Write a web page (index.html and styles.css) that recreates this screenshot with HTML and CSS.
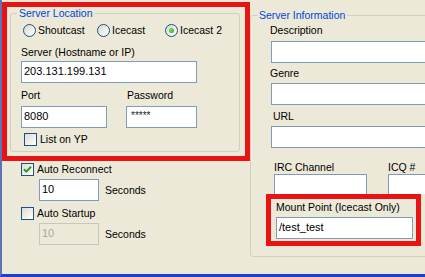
FILE: index.html
```html
<!DOCTYPE html>
<html lang="en">
<head>
    <meta charset="UTF-8">
    <meta name="viewport" content="width=device-width, initial-scale=1.0">
    <title>Server Settings</title>
    <link rel="stylesheet" href="styles.css">
</head>
<body>
    <div class="window">
        <div class="col-left">
            <div class="mark">
                <fieldset class="group">
                    <legend>Server Location</legend>
                    <div class="group-body">
                        <div class="radios">
                            <label class="radio-item r1"><span class="radio"></span>Shoutcast</label>
                            <label class="radio-item r2"><span class="radio"></span>Icecast</label>
                            <label class="radio-item"><span class="radio"><span class="dot"></span></span>Icecast 2</label>
                        </div>
                        <div class="field-label server-label">Server (Hostname or IP)</div>
                        <div class="textbox server-box">203.131.199.131</div>
                        <div class="port-grid">
                            <div class="field-label">Port</div>
                            <div class="field-label pw">Password</div>
                            <div class="textbox">8080</div>
                            <div class="textbox stars">*****</div>
                        </div>
                        <label class="check-item yp"><span class="check"></span>List on YP</label>
                    </div>
                </fieldset>
            </div>

            <div class="options">
                <label class="check-item">
                    <span class="check">
                        <svg width="11" height="11" viewBox="0 0 11 11"><path d="M2 5.2 L4.3 7.6 L9 2.8" fill="none" stroke="#21a121" stroke-width="2"/></svg>
                    </span>Auto Reconnect
                </label>
                <div class="sec-row">
                    <div class="textbox short">10</div>
                    <span>Seconds</span>
                </div>
                <label class="check-item startup"><span class="check"></span>Auto Startup</label>
                <div class="sec-row">
                    <div class="textbox short disabled">10</div>
                    <span>Seconds</span>
                </div>
            </div>
        </div>

        <div class="col-right">
            <fieldset class="group info">
                <legend>Server Information</legend>
                <div class="info-body">
                    <div class="field-label">Description</div>
                    <div class="textbox full first"></div>
                    <div class="field-label gap-label">Genre</div>
                    <div class="textbox full"></div>
                    <div class="field-label gap-label url">&nbsp;URL</div>
                    <div class="textbox full"></div>
                    <div class="irc-grid">
                        <div class="field-label">IRC Channel</div>
                        <div class="field-label">ICQ #</div>
                        <div class="textbox cut"></div>
                        <div class="textbox cut"></div>
                    </div>
                    <div class="mark mount">
                        <div class="field-label">Mount Point (Icecast Only)</div>
                        <div class="textbox mount-box">/test_test</div>
                    </div>
                </div>
            </fieldset>
        </div>
    </div>
</body>
</html>
```

FILE: styles.css
```css
body {
    margin: 0;
    background-color: #ece9d8;
    font-family: "Liberation Sans", Arial, sans-serif;
    font-size: 10.5px;
    color: #000;
    overflow: hidden;
}

.window {
    width: 425px;
    height: 277px;
    box-sizing: border-box;
    border-left: 2px solid #5b74b8;
    border-bottom: 3px solid #1d41c6;
    display: grid;
    grid-template-columns: 248px 175px;
    overflow: hidden;
}

/* red annotation frames */
.mark {
    border: 5px solid #e81414;
}

.col-left .mark {
    margin-top: 2px;
}

.group {
    margin: 0 5px 4px 3px;
    padding: 0;
    border: 1px solid #d0d0bf;
    border-radius: 3px;
    min-width: 0;
}

.group legend {
    margin-left: 6px;
    padding: 0 2px;
    color: #0046d5;
    line-height: 13px;
}

.group-body {
    padding: 4px 0 5px 10px;
}

.field-label {
    line-height: 13px;
    white-space: nowrap;
}

.textbox {
    height: 22px;
    box-sizing: border-box;
    border: 1px solid #7f9db9;
    background-color: #fff;
    padding: 0 2px;
    line-height: 18px;
    font-size: 11px;
    white-space: nowrap;
    overflow: hidden;
}

.radios {
    display: flex;
    margin-left: 2px;
}

.radio-item {
    display: flex;
    align-items: center;
    gap: 2px;
    line-height: 13px;
    flex: none;
}

.r1 {
    width: 74px;
}

.r2 {
    width: 68px;
}

.radio {
    width: 13px;
    height: 13px;
    box-sizing: border-box;
    border: 1px solid #1c5180;
    border-radius: 50%;
    background: linear-gradient(135deg, #d8d8d0, #fff);
    display: flex;
    align-items: center;
    justify-content: center;
}

.dot {
    width: 5px;
    height: 5px;
    border-radius: 50%;
    background: radial-gradient(circle at 40% 40%, #7be07b, #21a121);
}

.server-label {
    margin-top: 9px;
}

.server-box {
    width: 176px;
    margin-top: 2px;
}

.port-grid {
    display: grid;
    grid-template-columns: 86px 71px;
    column-gap: 19px;
    row-gap: 4px;
    margin-top: 6px;
}

.pw {
    padding-left: 1px;
}

.stars {
    color: #222;
    font-size: 10px;
    padding-left: 4px;
}

.check-item {
    display: flex;
    align-items: center;
    gap: 3px;
    line-height: 13px;
}

.check {
    width: 13px;
    height: 13px;
    box-sizing: border-box;
    border: 1px solid #1c5180;
    background: linear-gradient(135deg, #dcdcd7, #fff);
    display: flex;
    align-items: center;
    justify-content: center;
}

.yp {
    margin: 5px 0 0 3px;
}

.options {
    padding: 2px 0 0 19px;
}

.sec-row {
    display: flex;
    align-items: center;
    gap: 6px;
    margin: 3px 0 0 18px;
}

.short {
    width: 60px;
}

.startup {
    margin-top: 6px;
}

.disabled {
    border-color: #c9c7ba;
    background-color: #ece9d8;
    color: #aca899;
}

/* right side */
.info {
    margin: 9px -20px 0 0;
}

.info-body {
    padding: 2px 0 10px 15px;
}

.info .field-label {
    margin-left: 4px;
}

.full {
    width: 170px;
    margin-left: 5px;
    margin-top: 4px;
}

.gap-label {
    margin-top: 4px;
}

.info .full + .gap-label + .full {
    margin-top: 3px;
}

.info .url {
    margin-top: 5px;
}

.info .url + .full {
    margin-top: 4px;
}

.irc-grid {
    display: grid;
    grid-template-columns: 93px 1fr;
    column-gap: 21px;
    margin: 13px 0 0 8px;
}

.irc-grid .field-label {
    margin-left: 0;
}

.cut {
    height: 20px;
    border-bottom: none;
}

.mount {
    width: 137px;
    padding: 2px 3px 2px 5px;
}

.mount .field-label {
    margin-left: 0;
}

.mount-box {
    margin-top: 3px;
}
```
